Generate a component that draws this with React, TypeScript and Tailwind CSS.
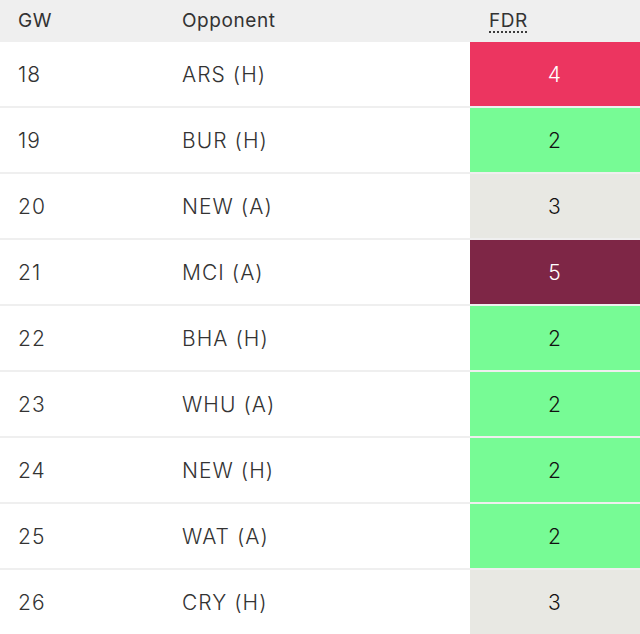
const rows: { gw: number; opp: string; fdr: number }[] = [
  { gw: 18, opp: "ARS (H)", fdr: 4 },
  { gw: 19, opp: "BUR (H)", fdr: 2 },
  { gw: 20, opp: "NEW (A)", fdr: 3 },
  { gw: 21, opp: "MCI (A)", fdr: 5 },
  { gw: 22, opp: "BHA (H)", fdr: 2 },
  { gw: 23, opp: "WHU (A)", fdr: 2 },
  { gw: 24, opp: "NEW (H)", fdr: 2 },
  { gw: 25, opp: "WAT (A)", fdr: 2 },
  { gw: 26, opp: "CRY (H)", fdr: 3 },
];

const fdrClass: Record<number, string> = {
  2: "bg-[#77fb95] text-[#111]",
  3: "bg-[#e8e8e3] text-[#111]",
  4: "bg-[#ec3560] text-white",
  5: "bg-[#7e2646] text-white",
};

export default function App() {
  return (
    <div className="w-[640px] bg-white font-['Inter',sans-serif] font-light text-[#333]">
      <div className="grid h-[42px] grid-cols-[164px_306px_170px] items-center bg-[#efefef] text-[19px] tracking-[0.03em] font-normal">
        <div className="pl-[18px]">GW</div>
        <div className="pl-[18px]">Opponent</div>
        <div className="pl-[19px]">
          <span className="underline decoration-dotted decoration-[#333] underline-offset-[5px]">FDR</span>
        </div>
      </div>
      {rows.map((r) => (
        <div
          key={r.gw}
          className="grid h-[66px] grid-cols-[164px_306px_170px] border-b-2 border-[#efefef] text-[21px] tracking-[0.05em]"
        >
          <div className="flex items-center pl-[18px] pt-[2px]">{r.gw}</div>
          <div className="flex items-center pl-[18px] pt-[2px]">{r.opp}</div>
          <div className={`flex items-center justify-center pt-[2px] ${fdrClass[r.fdr]}`}>{r.fdr}</div>
        </div>
      ))}
    </div>
  );
}
